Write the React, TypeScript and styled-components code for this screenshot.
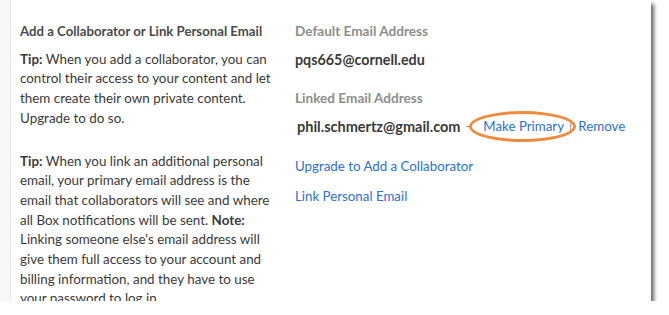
import React from "react";
import styled, { createGlobalStyle } from "styled-components";

const GlobalStyle = createGlobalStyle`
  html, body { margin: 0; padding: 0; background: #ffffff; }
  body { font-family: Lato, "Open Sans", Arial, sans-serif; -webkit-font-smoothing: antialiased; }
`;

const Paper = styled.div`
  width: 651px;
  height: 301px;
  background: #ffffff;
  box-shadow: 3px 4px 4px rgba(0, 0, 0, 0.6);
  overflow: hidden;
  display: flex;
`;

const Gutter = styled.div`
  width: 10px;
  flex: none;
  background: #f6f7f8;
  border-right: 1px solid #e6e7e9;
`;

const LeftCol = styled.div`
  width: 253px;
  flex: none;
  padding: 22px 0 0 9px;
  color: #3a3a3a;
  font-size: 13.4px;
  line-height: 19.7px;
`;

const Title = styled.div`
  font-weight: 700;
  font-size: 13.2px;
  color: #4a4a4a;
`;

const Para = styled.p<{ $gap: number }>`
  margin: ${(p) => p.$gap}px 0 0;
`;

const RightCol = styled.div`
  flex: 1;
  padding: 21px 0 0 22px;
  font-size: 13.3px;
  line-height: 21px;
`;

const Label = styled.div<{ $gap?: number }>`
  margin-top: ${(p) => p.$gap ?? 0}px;
  color: #7a7a7a;
  font-weight: 700;
  font-size: 13.6px;
  opacity: 0.85;
`;

const Value = styled.div<{ $gap: number }>`
  margin-top: ${(p) => p.$gap}px;
  color: #3a3a3a;
  font-weight: 700;
  font-size: 14.3px;
`;

const LinkedRow = styled.div`
  margin-top: 7px;
  display: flex;
  align-items: center;
  padding-left: 2px;
`;

const Email = styled.span`
  color: #3a3a3a;
  font-weight: 700;
  font-size: 14.5px;
`;

const Sep = styled.span`
  color: #8a8a8a;
  margin: 0 0 0 5px;
  font-size: 13px;
`;

const ActionLink = styled.a<{ $ml: number }>`
  color: #2d6fd6;
  text-decoration: none;
  margin-left: ${(p) => p.$ml}px;
  position: relative;
  cursor: pointer;
`;

const Highlight = styled.span`
  position: absolute;
  left: -14px;
  right: -12px;
  top: -5px;
  height: 31px;
  box-sizing: border-box;
  border: 3px solid #f08b3e;
  border-radius: 50%;
  pointer-events: none;
`;

const BlockLink = styled.a<{ $gap: number }>`
  display: block;
  margin-top: ${(p) => p.$gap}px;
  color: #2d6fd6;
  text-decoration: none;
  cursor: pointer;
`;

export default function App() {
  return (
    <>
      <GlobalStyle />
      <Paper>
        <Gutter />
        <LeftCol>
          <Title>Add a Collaborator or Link Personal Email</Title>
          <Para $gap={8}>
            <b>Tip:</b> When you add a collaborator, you can control their access to your content and let them create their own private content. Upgrade to do so.
          </Para>
          <Para $gap={23}>
            <b>Tip:</b> When you link an additional personal email, your primary email address is the email that collaborators will see and where all Box notifications will be sent. <b>Note:</b> Linking someone else's email address will give them full access to your account and billing information, and they have to use your password to log in.
          </Para>
        </LeftCol>
        <RightCol>
          <Label>Default Email Address</Label>
          <Value $gap={7}>pqs665@cornell.edu</Value>
          <Label $gap={18}>Linked Email Address</Label>
          <LinkedRow>
            <Email>phil.schmertz@gmail.com</Email>
            <Sep>-</Sep>
            <ActionLink $ml={13}>
              Make Primary
              <Highlight />
            </ActionLink>
            <Sep>|</Sep>
            <ActionLink $ml={6}>Remove</ActionLink>
          </LinkedRow>
          <BlockLink $gap={19}>Upgrade to Add a Collaborator</BlockLink>
          <BlockLink $gap={9}>Link Personal Email</BlockLink>
        </RightCol>
      </Paper>
    </>
  );
}
